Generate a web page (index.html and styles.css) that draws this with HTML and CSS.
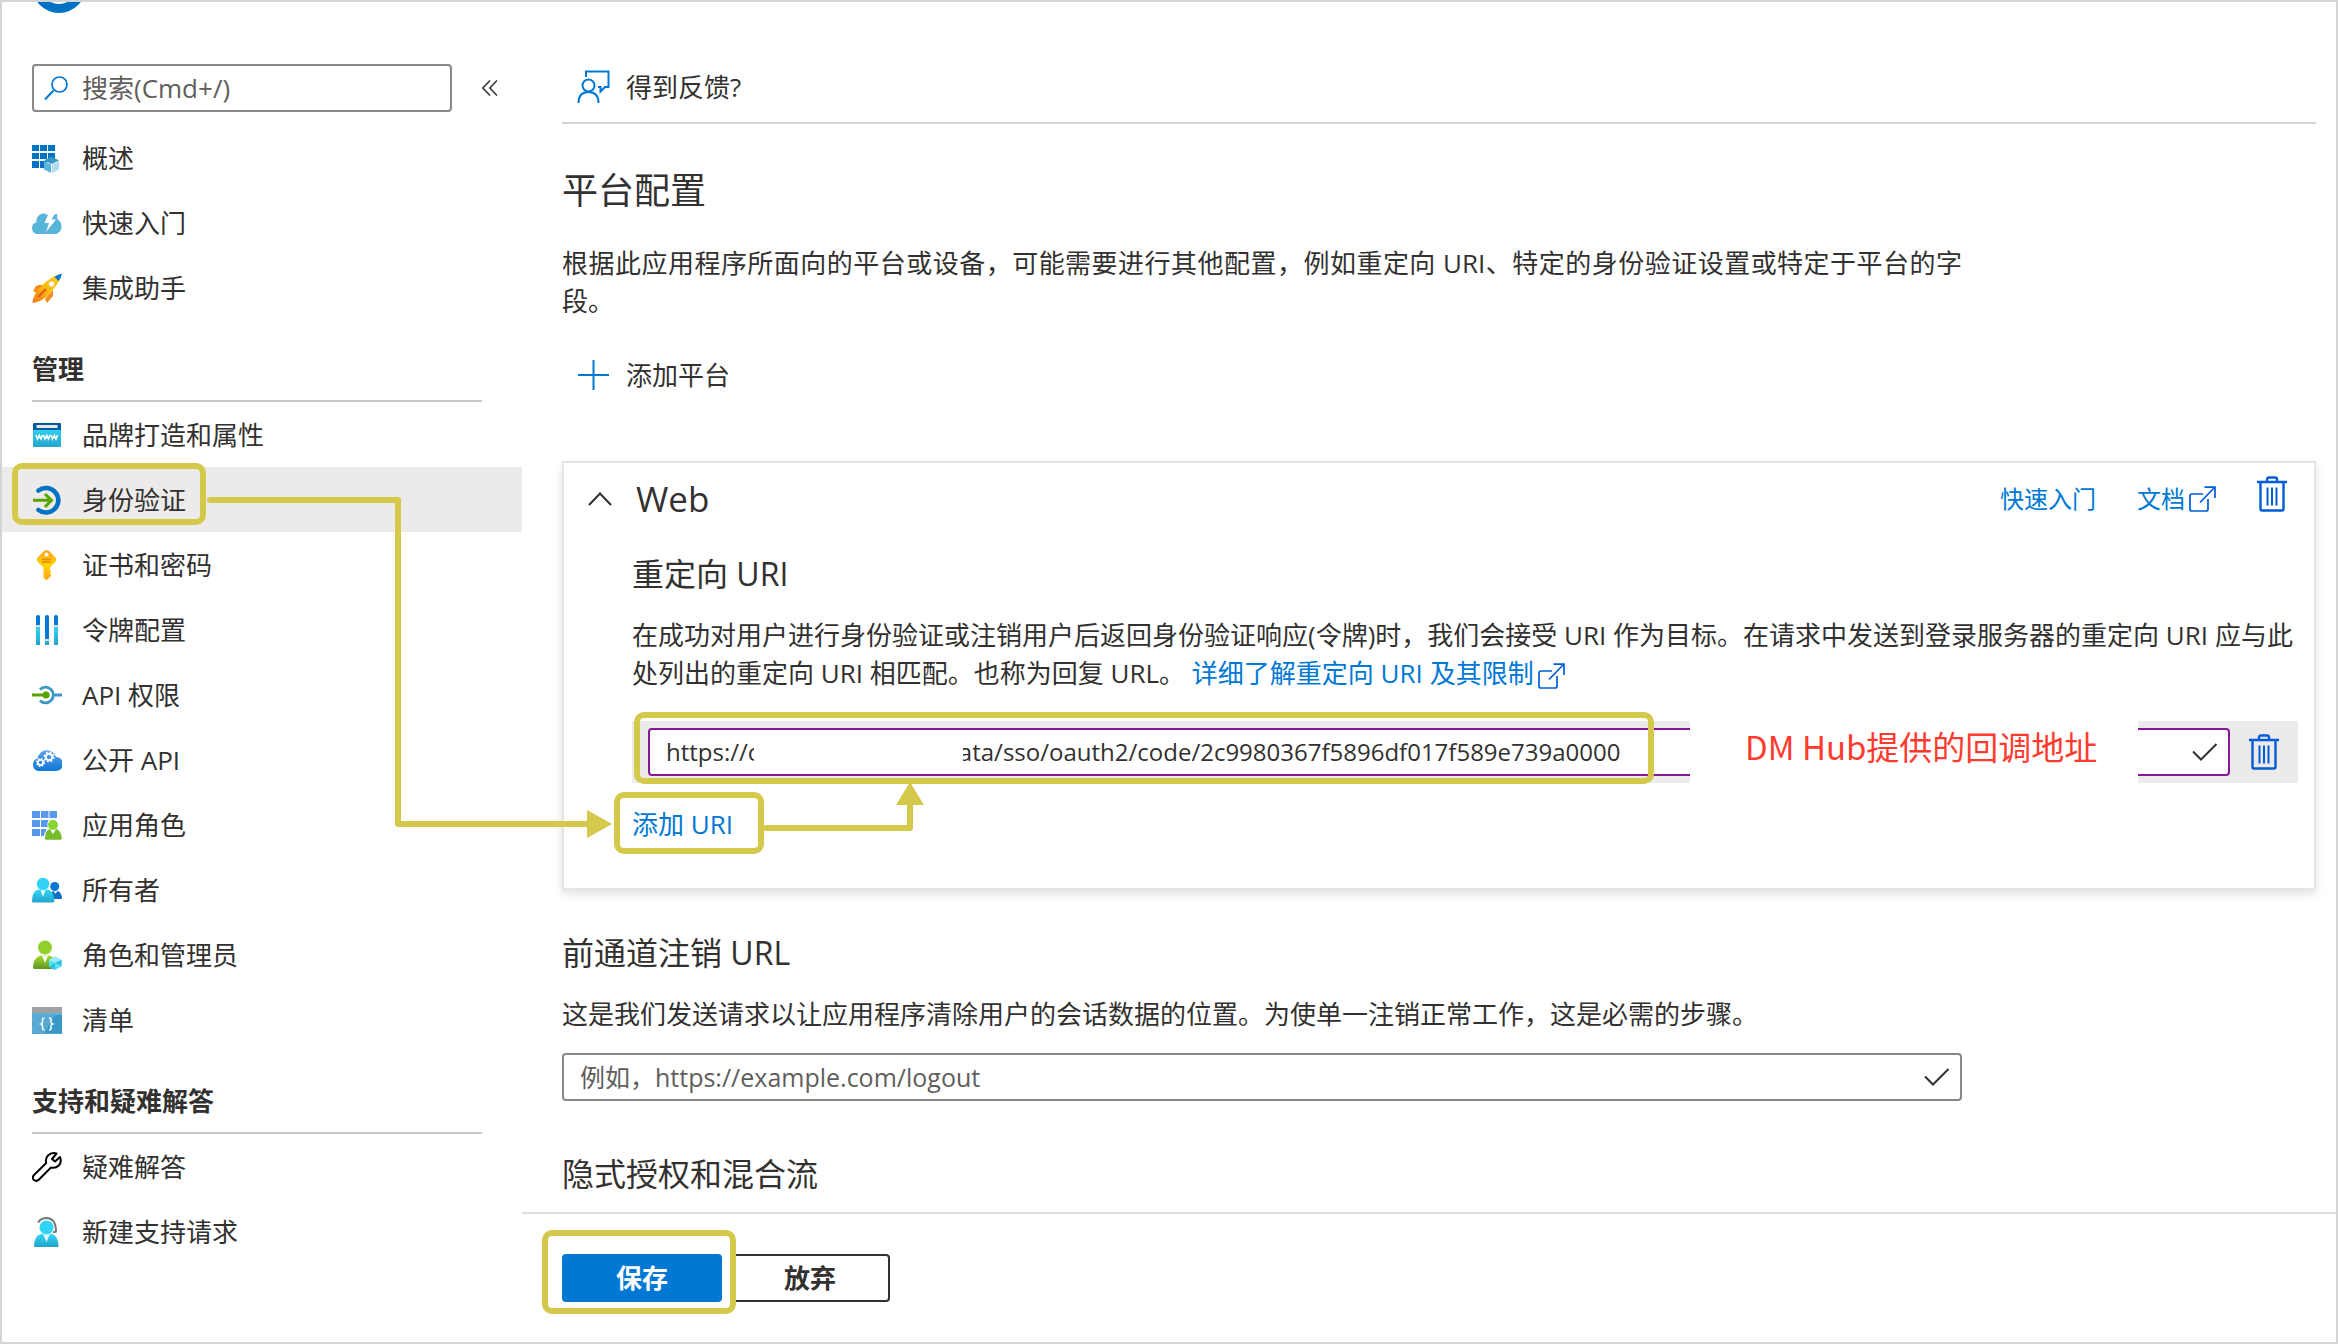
FILE: index.html
```html
<!DOCTYPE html>
<html lang="zh-CN">
<head>
<meta charset="utf-8">
<meta name="viewport" content="width=device-width, initial-scale=1">
<title>身份验证</title>
<link rel="stylesheet" href="styles.css">
</head>
<body>
<svg class="defs" width="0" height="0" aria-hidden="true">
  <defs>
    <linearGradient id="g-cyan" x1="0" y1="0" x2="0" y2="1"><stop offset="0" stop-color="#32d4f5"/><stop offset="1" stop-color="#22a5cb"/></linearGradient>
    <linearGradient id="g-blue" x1="0" y1="0" x2="0" y2="1"><stop offset="0" stop-color="#5ea0ef"/><stop offset="1" stop-color="#0f78d8"/></linearGradient>
    <linearGradient id="g-green" x1="0" y1="0" x2="0" y2="1"><stop offset="0" stop-color="#a6e02e"/><stop offset="1" stop-color="#5e9624"/></linearGradient>
    <linearGradient id="g-gold" x1="0" y1="0" x2="0" y2="1"><stop offset="0" stop-color="#fea11b"/><stop offset=".5" stop-color="#ffd400"/><stop offset="1" stop-color="#fea51a"/></linearGradient>
    <linearGradient id="g-rocket" x1="1" y1="0" x2="0" y2="1"><stop offset="0" stop-color="#fbd009"/><stop offset=".5" stop-color="#fbbc09"/><stop offset="1" stop-color="#f9731c"/></linearGradient>
    <symbol id="i-trash" viewBox="0 0 30 36"><path fill="none" stroke="#015cda" stroke-width="2.4" d="M0 6h30M10 5.500V3.500Q10 1.500 12 1.500h6Q20 1.500 20 3.500v2M3.500 6v27Q3.500 34.500 5 34.500h20Q26.500 34.500 26.500 33V6"/><path stroke="#015cda" stroke-width="2" d="M10.500 11.500v18M15 11.500v18M19.500 11.500v18"/></symbol>
    <symbol id="i-open" viewBox="0 0 27 26"><path fill="none" stroke="#015cda" stroke-width="1.700" d="M14 8H3Q1 8 1 10v13q0 2 2 2h14q2 0 2-2V13M11 16.500L25.500 1.500M15.500 1.200H26V12"/></symbol>
    <symbol id="i-check" viewBox="0 0 26 20"><path fill="none" stroke="#323130" stroke-width="2" d="M1 9.500l8 8L24.500 2"/></symbol>
  </defs>
</svg>

<div class="page">
  <nav class="sidebar" aria-label="资源菜单">
    <svg class="logo" width="48" height="12" viewBox="0 0 48 12" aria-hidden="true"><circle cx="22" cy="-16" r="22.500" fill="none" stroke="#0072c6" stroke-width="9"/></svg>
    <div class="search-row">
      <label class="search">
        <svg width="24" height="24" viewBox="0 0 24 24" aria-hidden="true"><path fill="none" stroke="#0078d4" stroke-width="2" d="M9.500 14.500L1 23.500"/><circle cx="15.500" cy="8.500" r="7.500" fill="none" stroke="#0078d4" stroke-width="1.700"/></svg>
        <input type="text" placeholder="搜索(Cmd+/)" aria-label="搜索">
      </label>
      <button class="collapse" type="button" aria-label="折叠菜单"><svg width="16" height="16" viewBox="0 0 16 16"><path fill="none" stroke="#323130" stroke-width="1.500" d="M8 .5L.8 8 8 15.500M15 .5L7.800 8l7.200 7.500"/></svg></button>
    </div>
    <ul class="menu">
      <li><a href="#overview">
        <svg viewBox="0 0 30 30"><g fill="#0072c6"><path d="M0 2h7v6H0zM8 2h7v6H8zM16 2h7v6h-7zM0 10h7v6H0zM8 10h7v6H8zM16 10h7v6h-7zM0 18h7v7H0zM8 18h7v7H8z"/></g><path fill="#3999c6" d="M19.500 13.500l7.500 4-7.500 3.500-7.500-3.500z"/><path fill="#59b4d9" d="M12 18l7 3.500V30l-7-3.500z"/><path fill="#b2dcef" d="M27 18l-7 3.500V30l7-3.500z"/><path stroke="#fff" d="M19.500 21.500V30"/></svg>概述</a></li>
      <li><a href="#quickstart">
        <svg viewBox="0 0 30 30"><path fill="#59b4d9" d="M6 26a6 6 0 0 1-1.500-11.800A7.500 7.500 0 0 1 13 5.500l2 1.500 4-3 2 2.500 4-.5.5 5.500A8 8 0 0 1 24 26z"/><path fill="#fff" d="M17.500 3l-5 12H17l-3 9L24 11.500h-4.500L24 4z"/></svg>快速入门</a></li>
      <li><a href="#assistant">
        <svg viewBox="0 0 30 30"><path fill="#f78d1e" d="M1 18l3-5q4-2 7-1l-6 8zM13 26l5-6 3-3v6l-6 7z"/><path fill="url(#g-rocket)" d="M26.500 1.500Q17 5 9 13.500 1 21 .500 30q10-1 17-9.500 9-9.500 11-16z"/><path fill="#0078d4" d="M30 .500Q25 1.500 22.500 4l4 4Q29 5.500 30 .500z"/><circle cx="19.500" cy="11" r="3" fill="#fff" stroke="#f0c060"/><path stroke="#d8601a" stroke-width="2" d="M6 24l8-8"/></svg>集成助手</a></li>
    </ul>
    <h2 class="menu-title">管理</h2>
    <ul class="menu">
      <li><a href="#branding">
        <svg viewBox="0 0 30 30"><path fill="url(#g-cyan)" d="M1 8h28v18q0 1-1 1H2q-1 0-1-1z"/><path fill="#005ba1" d="M2 3h26q1 0 1 1v6H1V4q0-1 1-1z"/><path fill="#e6e6e6" d="M4.500 5h21v3h-21z"/><path fill="none" stroke="#fff" stroke-width="1.600" d="M4 15l1.500 4L7.300 15.300 9 19l1.500-4M11.500 15l1.500 4 1.800-3.700L16.500 19l1.500-4M19 15l1.500 4 1.800-3.700L24 19l1.500-4"/></svg>品牌打造和属性</a></li>
      <li><a class="current marked" href="#authentication" aria-current="page">
        <svg viewBox="0 0 30 30"><path fill="none" stroke="#0072c6" stroke-width="4.600" stroke-linecap="round" d="M6.500 5.500A12.300 12.300 0 1 1 6.500 25"/><path fill="none" stroke="#57a300" stroke-width="3" d="M1 15.300h18M13 9l6.500 6.300L13 22"/></svg>身份验证</a></li>
      <li><a href="#certificates">
        <svg viewBox="0 0 30 30"><path fill="url(#g-gold)" d="M14.500 0q1.500 0 3 1.500l6 6q1.500 2 0 4L18 17.500v2.500l1.500 1.500-1.500 2 1.500 1.500-1.500 2-3.500 3.500-3-3V17.500L5.500 11.500q-1.500-2 0-4l6-6q1.500-1.500 3-1.500z"/><circle cx="14.500" cy="4.500" r="2" fill="#fff"/><path stroke="#e58b12" stroke-width="1.500" d="M10 9.500h9M10 12h9"/></svg>证书和密码</a></li>
      <li><a href="#token">
        <svg viewBox="0 0 30 30"><path fill="url(#g-cyan)" d="M4 12h4v18H4zM22 12h4v18h-4zM13 26h4v4h-4z"/><path fill="#0078d4" d="M4 1q2-2 4 0v9H4zM13 1q2-2 4 0v23h-4zM22 1q2-2 4 0v9h-4z"/><path fill="#ddd" d="M3.500 10h5v2h-5zM12.500 24h5v2h-5zM21.500 10h5v2h-5z"/></svg>令牌配置</a></li>
      <li><a href="#api-permissions">
        <svg viewBox="0 0 30 30"><path fill="none" stroke="#3999c6" stroke-width="2.800" d="M8 9.500a7.800 7.800 0 1 1 0 11M22 15h8"/><path stroke="#57a300" stroke-width="3" d="M0 15h13"/><circle cx="14" cy="15" r="3.600" fill="#57a300"/></svg>API 权限</a></li>
      <li><a href="#expose-api">
        <svg viewBox="0 0 30 30"><path fill="url(#g-blue)" d="M6 26a6.500 6.500 0 0 1-.5-12.500A9.500 9.500 0 0 1 24 12a7 7 0 0 1 0 14z"/><g fill="none" stroke="#fff"><circle cx="17" cy="12" r="3.200" stroke-width="2"/><circle cx="17" cy="12" r="4.800" stroke-width="1.600" stroke-dasharray="1.900 1.870"/><circle cx="8.500" cy="17.500" r="2.600" stroke-width="1.800"/><circle cx="8.500" cy="17.500" r="3.900" stroke-width="1.400" stroke-dasharray="1.530 1.530"/></g></svg>公开 API</a></li>
      <li><a href="#app-roles">
        <svg viewBox="0 0 30 30"><path fill="#5797ee" d="M0 1h8v7H0zM9 1h7.500v7H9zM17.500 1H25v7h-7.500zM0 10h8v7H0zM9 10h7.500v7H9zM0 19h8v7H0zM9 19h5v7H9zM17.500 10H25v7h-7.500z"/><path fill="#fff" d="M21 8.500a6 6 0 0 1 4.500 9.500q4 2 4.500 8v4H11.500q0-8 5-12a6 6 0 0 1 4.500-9.500z"/><path fill="#76bc2d" d="M13 29q0-9 5-10l3 5 3-5q5 1 6 10-1 .800-2 .800H14q-1 0-1-.800z"/><circle cx="21" cy="15" r="5" fill="#86d633"/></svg>应用角色</a></li>
      <li><a href="#owners">
        <svg viewBox="0 0 30 30"><path fill="#0f6cc4" d="M18 24q0-7 3.500-8l2 3 2-3q4 1 4.500 7.500l-1 .500z"/><circle cx="22.700" cy="11.500" r="4.500" fill="#0078d4"/><path fill="url(#g-cyan)" d="M0 26.500Q0 16.500 6 14.500l5 .500 5-.500q6 2 6.500 12-.500 1-2 1h-19Q0 27.500 0 26.500z"/><path fill="#e6f7fc" d="M8.500 15h5L11 22z"/><circle cx="11" cy="9" r="6.200" fill="#32d4f5"/></svg>所有者</a></li>
      <li><a href="#roles">
        <svg viewBox="0 0 30 30"><path fill="url(#g-green)" d="M1 28q0-9 6-12l6-1 6 1q5 3 6 12l-1 1H2z"/><path fill="#fff" d="M10 15.500h6L13 23z"/><circle cx="13" cy="7.500" r="7" fill="#93cf2d"/><path fill="#50e6ff" d="M23 16.500l6.500 3.500v6.500L23 30l-6-3.500V20z"/><path fill="#9cebff" d="M17 20l6-3.500 6.500 3.500L23 23z"/><path fill="#32bedd" d="M23 23l-6 3.500L23 30zM23 23l6.500-3v6z"/></svg>角色和管理员</a></li>
      <li><a href="#manifest">
        <svg viewBox="0 0 30 30"><path fill="#59b4d9" d="M0 8h30v21H0z"/><path fill="#3999c6" d="M0 10h30v18.500H0z"/><path fill="#59a9d0" d="M0 10h23L12 28.500H0z"/><path fill="#a0a1a2" d="M0 2h30v6H0z"/><path fill="none" stroke="#fff" stroke-width="1.500" d="M12.500 13q-2 0-2 2v2q0 1.500-1.500 2 1.500.500 1.500 2v2q0 2 2 2M17 13q2 0 2 2v2q0 1.500 1.500 2-1.500.500-1.500 2v2q0 2-2 2"/></svg>清单</a></li>
    </ul>
    <h2 class="menu-title">支持和疑难解答</h2>
    <ul class="menu">
      <li><a href="#troubleshoot">
        <svg viewBox="0 0 30 30"><path fill="none" stroke="#000" stroke-width="2" stroke-linejoin="round" d="M24.500 1.500q-5-1.500-8.500 2-3 3-1.800 7.500L2 23q-2.500 3 0 5 2.500 2 5-.500L19 15.500q4.500 1.200 7.800-2Q30 10 28 5l-5 4.500-3-2.500z"/></svg>疑难解答</a></li>
      <li><a href="#support">
        <svg viewBox="0 0 30 30"><path fill="none" stroke="#767676" stroke-width="2" d="M6 5.500Q9 1 14.500 1 24 1.500 24 14.500l-3 1"/><path fill="url(#g-cyan)" d="M2 29.500Q2 19 9 17h11q6.500 2 6.500 12.500 0 .500-1 .500h-22Q2 30 2 29.500z"/><path fill="#e6f7fc" d="M11 17h7l-3.500 8z"/><circle cx="14.500" cy="10.500" r="7" fill="#32d4f5"/></svg>新建支持请求</a></li>
    </ul>
  </nav>

  <main class="main">
    <div class="content">
      <div class="toolbar">
        <button class="command" type="button">
          <svg width="33" height="34" viewBox="0 0 33 34" aria-hidden="true"><path fill="none" stroke="#0078d4" stroke-width="2" d="M9 7V1.500h22.500V17H28l-4.500 4.500V17H21M1.500 33q0-11 10-11t10 11"/><circle cx="11.500" cy="15.500" r="6" fill="none" stroke="#0078d4" stroke-width="2"/></svg>得到反馈?</button>
      </div>

      <h1 class="title">平台配置</h1>
      <p class="text narrow title-text">根据此应用程序所面向的平台或设备，可能需要进行其他配置，例如重定向 URI、特定的身份验证设置或特定于平台的字段。</p>
      <button class="command add-platform" type="button">
        <svg width="33" height="32" viewBox="0 0 33 32" aria-hidden="true"><path stroke="#0078d4" stroke-width="2" d="M1 16h31M16.500 1v30"/></svg>添加平台</button>

      <section class="card">
        <header class="card-head">
          <button class="toggle" type="button" aria-label="折叠"><svg width="24" height="14" viewBox="0 0 24 14"><path fill="none" stroke="#323130" stroke-width="2" d="M1 13L12 1.500 23 13"/></svg></button>
          <h2 class="card-title">Web</h2>
          <a class="head-link" href="#quickstart">快速入门</a>
          <a class="head-link" href="#docs">文档<svg class="open" width="27" height="26"><use href="#i-open"/></svg></a>
          <button class="icon-button" type="button" aria-label="删除平台"><svg width="30" height="36"><use href="#i-trash"/></svg></button>
        </header>
        <div class="card-body">
          <h3 class="subtitle">重定向 URI</h3>
          <p class="text card-text">在成功对用户进行身份验证或注销用户后返回身份验证响应(令牌)时，我们会接受 URI 作为目标。在请求中发送到登录服务器的重定向 URI 应与此处列出的重定向 URI 相匹配。也称为回复 URL。 <a href="#learn">详细了解重定向 URI 及其限制<svg class="open" width="27" height="26"><use href="#i-open"/></svg></a></p>
          <div class="uri-row">
            <div class="field uri-field">
              <input class="uri-input" type="text" aria-label="重定向 URI" value="https://c                                ata/sso/oauth2/code/2c9980367f5896df017f589e739a0000">
              <span class="redaction"></span>
              <svg width="26" height="20" aria-hidden="true"><use href="#i-check"/></svg>
            </div>
            <button class="icon-button" type="button" aria-label="删除 URI"><svg width="30" height="36"><use href="#i-trash"/></svg></button>
            <span class="note">DM Hub提供的回调地址</span>
            <span class="uri-mark"></span>
          </div>
          <button class="add-uri marked" type="button">添加 URI</button>
        </div>
      </section>

      <h3 class="subtitle logout-title">前通道注销 URL</h3>
      <p class="text card-text" id="logout-help">这是我们发送请求以让应用程序清除用户的会话数据的位置。为使单一注销正常工作，这是必需的步骤。</p>
      <div class="field narrow logout-field">
        <input class="logout-input" type="text" placeholder="例如，https://example.com/logout" aria-label="前通道注销 URL" aria-describedby="logout-help">
        <svg width="26" height="20" aria-hidden="true"><use href="#i-check"/></svg>
      </div>
      <h3 class="subtitle implicit-title">隐式授权和混合流</h3>
    </div>

    <footer class="footer">
      <button class="button primary marked" type="button">保存</button>
      <button class="button" type="button">放弃</button>
    </footer>
  </main>

  <svg class="arrows" width="940" height="860" viewBox="0 0 940 860" aria-hidden="true">
    <g fill="none" stroke="#d4c94a" stroke-width="6" stroke-linecap="round" stroke-linejoin="round"><path d="M210 500H398V824H588"/><path d="M766 828H910V804"/></g>
    <path fill="#d4c94a" d="M587 810L612 824L587 838zM896 805L910 782L924 805z"/>
  </svg>
</div>
</body>
</html>
```

FILE: styles.css
```css
*, *::before, *::after { box-sizing: border-box; }

body {
  margin: 0;
  color: #323130;
  background: #fff;
  font: 26px/38px "Open Sans", "Noto Sans CJK SC", sans-serif;
}

h1, h2, h3, p, ul { margin: 0; padding: 0; font-weight: 400; }
button, input { font: inherit; color: inherit; }
button { padding: 0; border: 0; background: none; cursor: pointer; }
a { color: #0078d4; text-decoration: none; }
svg { display: block; flex: none; }
.defs { position: absolute; }

.page {
  position: relative;
  display: grid;
  grid-template-columns: 520px minmax(0, 1fr);
  min-height: 100vh;
  border: 2px solid #d4d4d4;
}

/* Sidebar */
.logo { margin-left: 35px; }
.search-row { display: flex; align-items: center; gap: 30px; margin: 50px 0 13px 30px; }
.search {
  display: flex;
  align-items: center;
  gap: 14px;
  width: 420px;
  height: 48px;
  padding: 0 10px;
  border: 2px solid #8a8886;
  border-radius: 4px;
}
input { flex: 1; min-width: 0; height: 38px; padding: 0; border: 0; outline: 0; background: none; }
input::placeholder { color: #605e5c; opacity: 1; }

.menu { list-style: none; }
.menu a {
  display: flex;
  align-items: center;
  gap: 20px;
  height: 65px;
  padding-left: 30px;
  color: #323130;
}
.menu svg { width: 30px; height: 30px; }
.menu .current { background: #edebe9; }
.menu-title {
  margin: 0 40px 0 30px;
  padding: 30px 0 12px;
  border-bottom: 2px solid #c8c8c8;
  font-size: 26px;
  font-weight: 700;
}

/* Main column */
.main { display: flex; flex-direction: column; }
.content { flex: 1; padding: 0 20px 16px 40px; }
.toolbar { padding: 66px 0 16px; border-bottom: 2px solid #d4d4d4; }
.command { display: flex; align-items: center; gap: 16px; height: 38px; padding-left: 15px; }
.title { margin-top: 43px; font-size: 36px; line-height: 48px; }
.text { line-height: 38px; }
.narrow { max-width: 1400px; }
.title-text { margin-top: 29px; text-align: justify; }
.add-platform { margin-top: 36px; }

.card {
  margin-top: 67px;
  border: 2px solid #e5e5e5;
  box-shadow: 0 4px 8px rgba(0, 0, 0, 0.12);
}
.card-head { display: flex; align-items: center; gap: 41px; padding: 12px 27px 0 24px; }
.card-title { flex: 1; margin-left: -17px; font-size: 35px; line-height: 48px; }
.head-link { display: flex; align-items: center; gap: 4px; font-size: 24px; }
.card-head .icon-button { margin-top: -10px; }
.card-body { padding: 30px 16px 45px 68px; }
.subtitle { font-size: 32px; line-height: 42px; }
.card-text { margin-top: 21px; margin-right: -12px; }
.open { display: inline-block; vertical-align: -6px; margin-left: 4px; }
.head-link .open { margin: 0; }

.field {
  display: flex;
  align-items: center;
  height: 48px;
  padding: 0 10px 0 16px;
  border: 2px solid #8a8886;
  border-radius: 4px;
  background: #fff;
}
.uri-row {
  position: relative;
  display: flex;
  align-items: center;
  gap: 19px;
  height: 62px;
  margin-top: 29px;
  padding: 0 19px 0 16px;
  background: #edebe9;
}
.uri-field { position: relative; flex: 1; border-color: #881798; }
.uri-input { font-size: 24px; }
.redaction { position: absolute; left: 104px; top: 2px; width: 209px; height: 40px; background: #fff; }
.note {
  position: absolute;
  top: 0;
  bottom: 0;
  right: 160px;
  width: 448px;
  padding-left: 55px;
  background: #fff;
  color: #ff3b30;
  font: 33px/50px "Noto Sans CJK SC", sans-serif;
}
.add-uri { display: block; margin-top: 22px; color: #0078d4; line-height: 38px; }

.logout-title { margin-top: 42px; }
.logout-field { margin-top: 20px; }
.logout-input { font-size: 25px; }
.implicit-title { margin-top: 52px; }

.footer { display: flex; gap: 8px; padding: 40px; border-top: 2px solid #dedede; }
.button {
  width: 160px;
  height: 48px;
  border: 2px solid #323130;
  border-radius: 4px;
  font-weight: 700;
  line-height: 38px;
}
.primary { border-color: #0078d4; background: #0078d4; color: #fff; }

/* Highlight frames and arrows drawn over the page */
.marked { position: relative; }
.marked::after, .uri-mark {
  content: "";
  position: absolute;
  border: 6px solid #d4c94a;
  border-radius: 10px;
}
.current::after { left: 10px; top: -4px; width: 194px; height: 62px; }
.add-uri::after { left: -18px; top: -13px; width: 150px; height: 62px; }
.primary::after { left: -22px; top: -26px; width: 194px; height: 84px; }
.uri-mark { left: 2px; top: -9px; width: 1020px; height: 72px; }
.arrows { position: absolute; left: -2px; top: -2px; pointer-events: none; }
```
